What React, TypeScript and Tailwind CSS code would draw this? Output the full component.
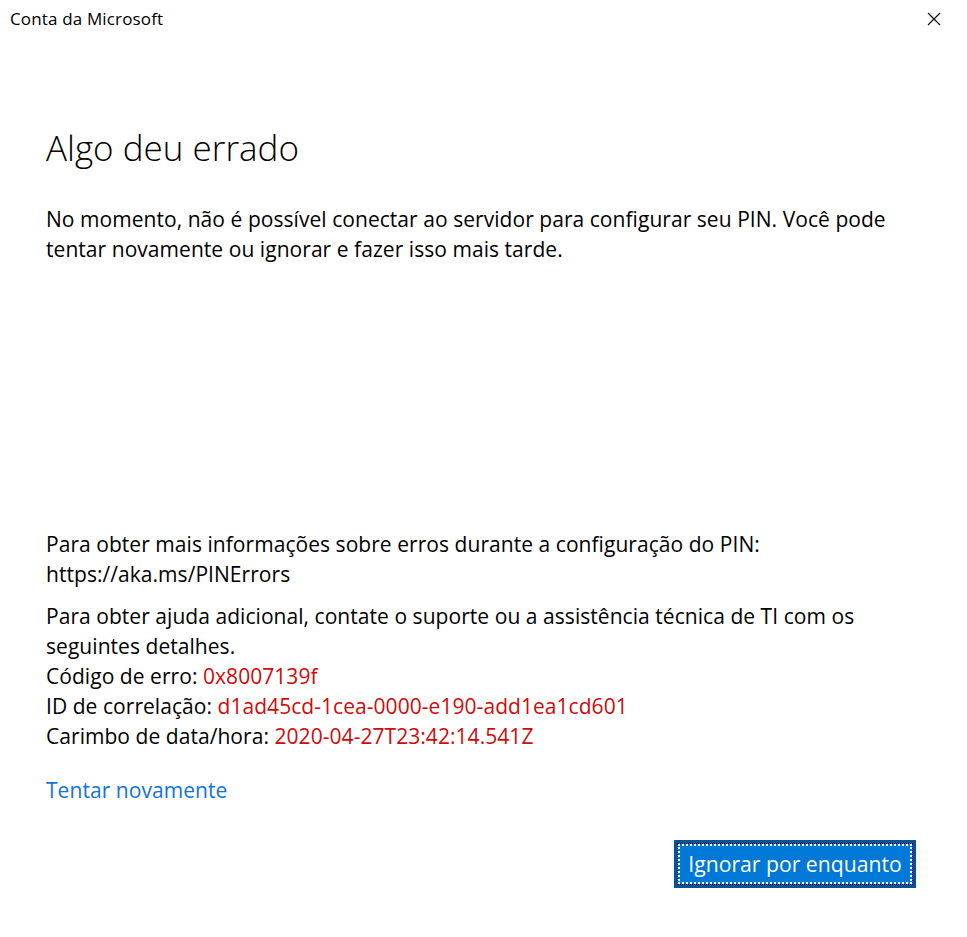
import React from 'react'

const font = { fontFamily: '"Open Sans", "Noto Sans", sans-serif' }

function CloseIcon() {
  return (
    <svg width="14" height="14" viewBox="0 0 14 14" className="text-black">
      <path d="M1 1 L13 13 M13 1 L1 13" stroke="currentColor" strokeWidth="1.1" fill="none" />
    </svg>
  )
}

function DetailRow({ label, value }: { label: string; value: string }) {
  return (
    <div>
      {label} <span className="text-[#d00a0a]">{value}</span>
    </div>
  )
}

export default function App() {
  return (
    <div
      className="w-[967px] h-[937px] bg-white text-black flex flex-col"
      style={font}
    >
      {/* title bar */}
      <div className="h-[37px] flex items-center justify-between pl-[10px] pr-[26px] shrink-0">
        <span className="text-[17px] tracking-[0.15px]">Conta da Microsoft</span>
        <CloseIcon />
      </div>

      <div className="flex-1 flex flex-col px-[46px] pt-[89px] pb-[49px]">
        <h1 className="text-[35px] font-light leading-[44px]">Algo deu errado</h1>

        <p className="mt-[34px] text-[21px] leading-[30px] tracking-[0.05px] max-w-[870px]">
          No momento, não é possível conectar ao servidor para configurar seu PIN. Você pode
          tentar novamente ou ignorar e fazer isso mais tarde.
        </p>

        <div className="flex-1" />

        <div className="text-[21px] leading-[30px] tracking-[0.05px]">
          <p>
            Para obter mais informações sobre erros durante a configuração do PIN:
            <br />
            https://aka.ms/PINErrors
          </p>
          <div className="mt-[12px]">
            <p className="max-w-[850px]">
              Para obter ajuda adicional, contate o suporte ou a assistência técnica de TI com os
              seguintes detalhes.
            </p>
            <DetailRow label="Código de erro:" value="0x8007139f" />
            <DetailRow label="ID de correlação:" value="d1ad45cd-1cea-0000-e190-add1ea1cd601" />
            <DetailRow label="Carimbo de data/hora:" value="2020-04-27T23:42:14.541Z" />
          </div>

          <button className="mt-[24px] text-[#1473d6] hover:underline">Tentar novamente</button>
        </div>

        <div className="mt-[35px] flex justify-end pr-[5px]">
          <button className="w-[242px] h-[48px] border-[3px] border-[#00529c] bg-[#0078d7] p-[1px]">
            <span className="flex h-full w-full items-center justify-center border-2 border-dotted border-white text-white text-[21.2px] outline-1 outline-dotted outline-black">
              Ignorar por enquanto
            </span>
          </button>
        </div>
      </div>
    </div>
  )
}
